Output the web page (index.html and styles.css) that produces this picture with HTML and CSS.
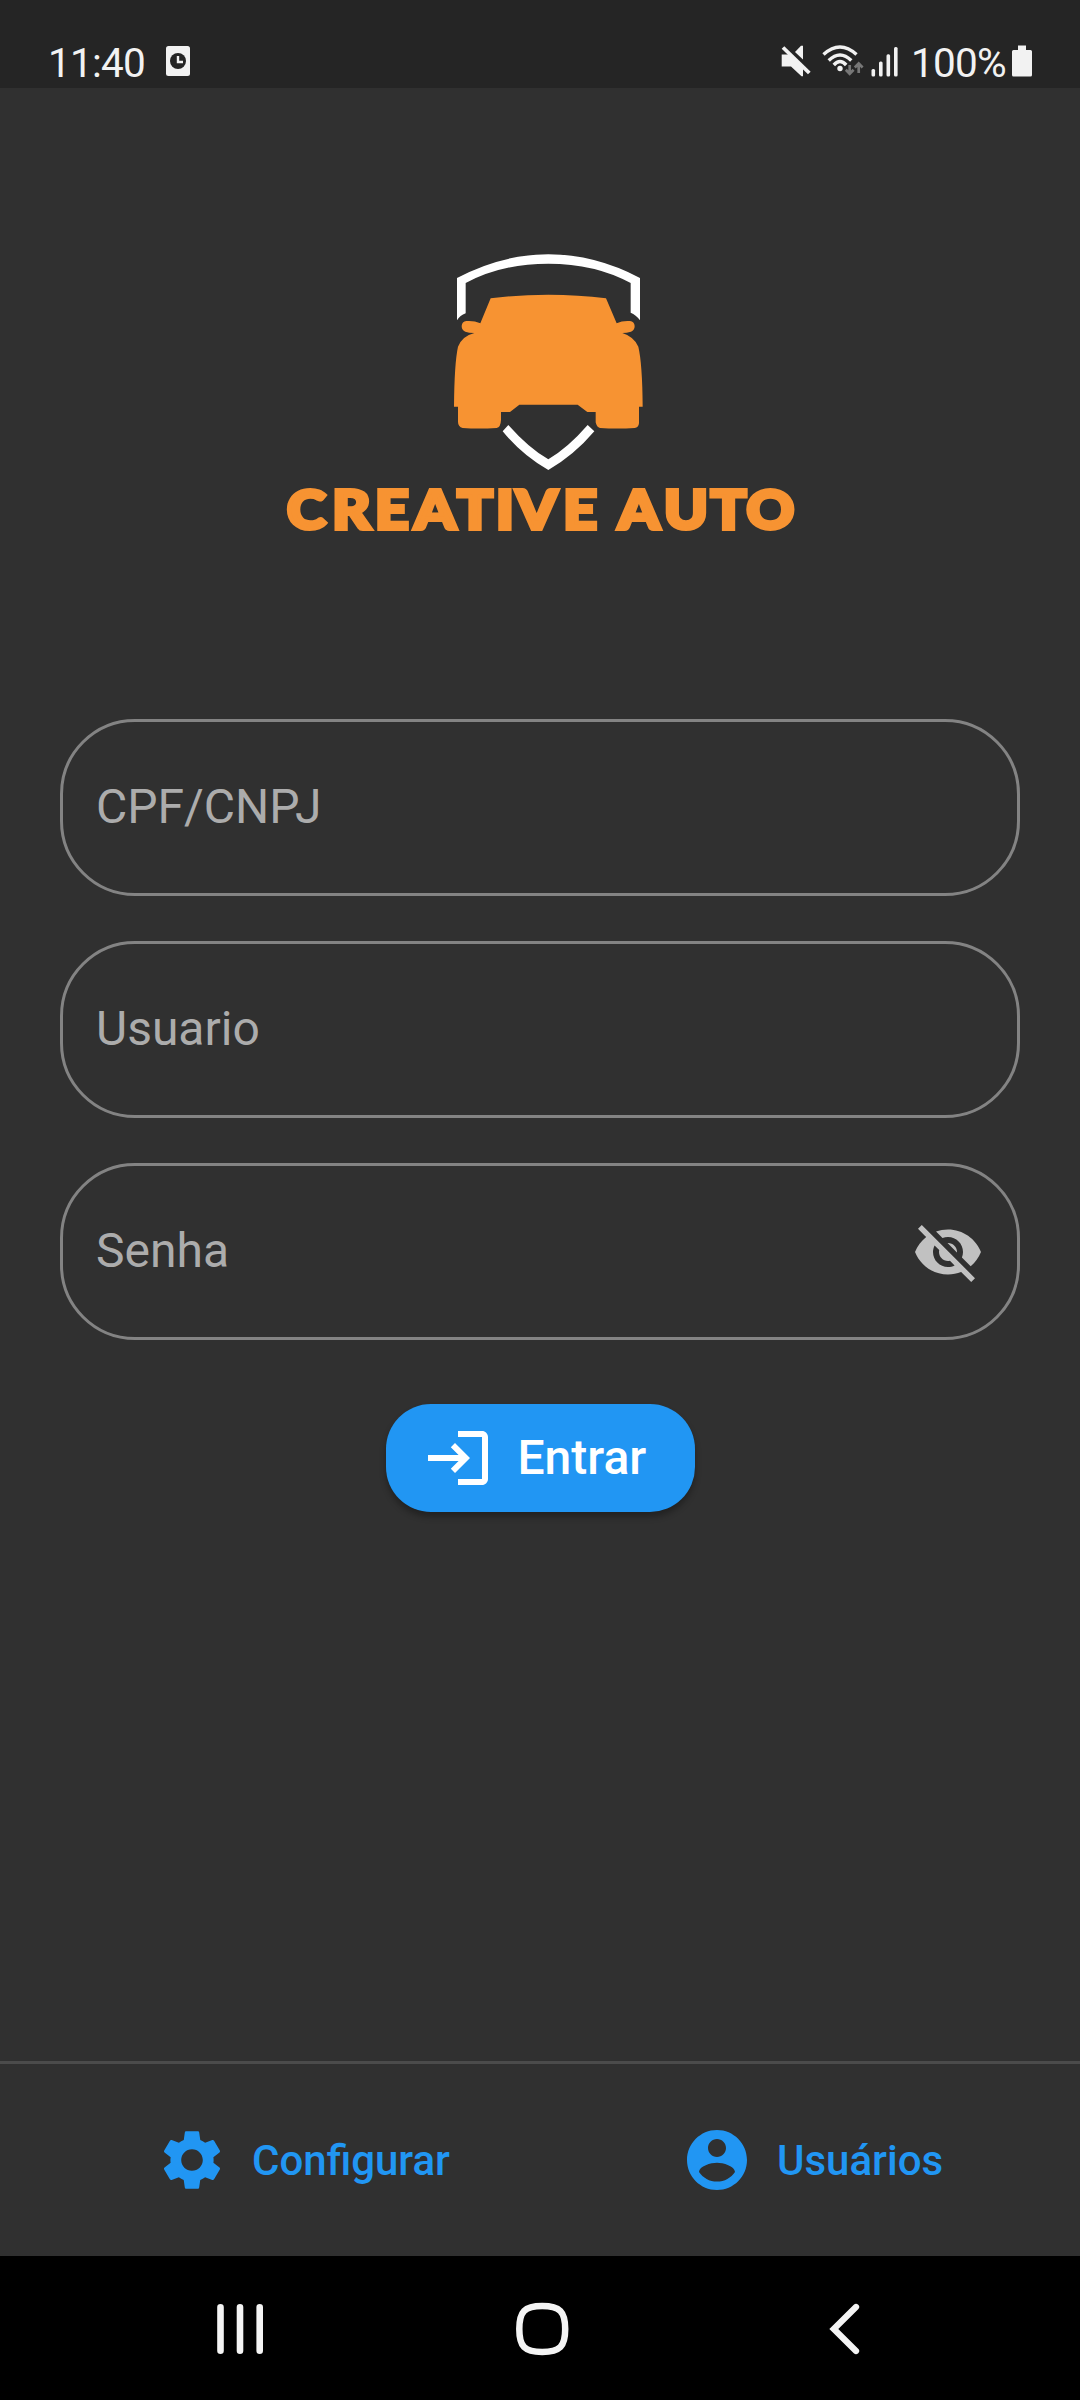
FILE: index.html
```html
<!DOCTYPE html>
<html lang="pt-BR">
<head>
<meta charset="utf-8">
<title>Creative Auto</title>
<link rel="stylesheet" href="styles.css">
</head>
<body>
<div class="screen">
  <header class="status">
    <div class="status-left">
      <span class="clock">11:40</span>
      <svg class="card-icon" width="24" height="30" viewBox="0 0 24 30"><rect width="24" height="30" rx="2.5" fill="#f2f2f2"/><circle cx="12" cy="15" r="8" fill="#252525"/><path d="M12 10v6h5" fill="none" stroke="#f2f2f2" stroke-width="2.4"/></svg>
    </div>
    <div class="status-right">
      <svg class="indicators" width="120" height="34" viewBox="780 44 120 34">
        <g fill="#f2f2f2">
          <path d="M781.700 54.500H790L803 67V76.200H801.500L791 66.500H781.700Z"/>
          <path d="M795 52L801 45.700H803V59.500Z"/>
          <circle cx="840" cy="68.500" r="2.700"/>
          <rect x="871.500" y="69" width="3.600" height="7.500" rx="1.500"/>
          <rect x="879" y="61.600" width="3.600" height="14.900" rx="1.500"/>
          <rect x="886.500" y="54.200" width="3.600" height="22.300" rx="1.500"/>
          <rect x="894" y="47" width="3.600" height="29.500" rx="1.500"/>
        </g>
        <path d="M783 47.500L809.300 73" stroke="#f2f2f2" stroke-width="3.800"/>
        <g fill="none" stroke="#f2f2f2" stroke-width="3.400">
          <path d="M823.500 54.500Q840 39.500 856.500 54.500"/>
          <path d="M828.700 60.500Q840 49.500 851.300 60.500"/>
          <path d="M833.800 65Q840 58 846.200 65"/>
        </g>
        <path d="M849.700 65v8M845.800 69.800l3.900 4 3.900-4M858.700 73v-8M854.800 67.500l3.900-4 3.900 4" fill="none" stroke="#777" stroke-width="2.700"/>
      </svg>
      <span class="percent">100%</span>
      <svg class="battery" width="20" height="32" viewBox="0 0 20 32"><path d="M6 .5h8V5h4.500Q20 5 20 6.500V30Q20 31.500 18.500 31.500H1.500Q0 31.500 0 30V6.500Q0 5 1.500 5H6Z" fill="#f2f2f2"/></svg>
    </div>
  </header>

  <main class="content">
    <svg class="logo" width="560" height="330" viewBox="260 240 560 330">
      <g transform="translate(430 230) scale(.33333)">
        <g fill="#fff">
          <path d="M81 271V144Q215 73 355 73Q495 73 630 144V271Q618 254 602 248V159Q495 101 355 101Q215 101 107 159V250Q90 256 81 271Z"/>
          <path d="M235 585Q297 655 355 688Q415 652 473 585L493 604Q432 676 355 720Q277 676 218 604Z"/>
        </g>
        <path fill="#f79332" d="M182 205Q265 194 355 194Q445 194 528 205L560 280Q578 271 600 273Q613 275 614 288Q614 301 603 305Q590 309 577 309Q612 320 625 350Q637 400 638 530H627V580Q626 592 614 594Q562 597 510 594Q500 592 497 577V546H472L443 524H268L240 546H213V570Q212 592 200 594Q145 597 98 594Q84 590 84 575V530H72Q73 400 84 350Q97 318 133 309Q116 309 106 305Q95 301 95 288Q96 275 109 273Q132 271 151 280Z"/>
      </g>
      <g transform="translate(280 529.200) scale(1.1 1)">
        <text class="brand" x="6.300 47.400 86.300 122.300 161.200 196.300 214.500 257.600 296 307.600 349 391.700 424" y="0">CREATIVE AUTO</text>
      </g>
    </svg>

    <form class="form">
      <label class="field"><span>CPF/CNPJ</span></label>
      <label class="field"><span>Usuario</span></label>
      <label class="field"><span>Senha</span>
        <svg class="icon eye" viewBox="0 0 24 24"><path d="M12 7c2.760 0 5 2.240 5 5 0 .65-.13 1.260-.36 1.830l2.920 2.920c1.510-1.260 2.700-2.890 3.430-4.750-1.730-4.390-6-7.500-11-7.500-1.400 0-2.740.25-3.980.7l2.160 2.160C10.740 7.130 11.350 7 12 7zM2 4.270l2.280 2.280.46.46C3.080 8.300 1.780 10.020 1 12c1.730 4.390 6 7.500 11 7.500 1.550 0 3.030-.3 4.380-.84l.42.42L19.730 22 21 20.730 3.270 3 2 4.270zM7.530 9.800l1.550 1.550c-.05.21-.08.43-.08.65 0 1.660 1.340 3 3 3 .22 0 .44-.03.65-.08l1.550 1.550c-.67.33-1.410.53-2.200.53-2.760 0-5-2.240-5-5 0-.79.2-1.530.53-2.200zm4.310-.78l3.150 3.150.02-.16c0-1.660-1.340-3-3-3l-.17.01z"/></svg>
      </label>
      <button class="submit" type="button">
        <svg class="icon" viewBox="0 0 24 24"><path d="M11 7L9.600 8.400l2.600 2.600H2v2h10.200l-2.600 2.600L11 17l5-5-5-5zm9 12h-8v2h8c1.100 0 2-.9 2-2V5c0-1.100-.9-2-2-2h-8v2h8v14z"/></svg>
        <span>Entrar</span>
      </button>
    </form>
  </main>

  <footer class="actions">
    <a class="action">
      <svg class="icon" viewBox="0 0 24 24"><path d="M19.140 12.940c.04-.3.06-.61.06-.94 0-.32-.02-.64-.07-.94l2.030-1.580c.18-.14.23-.41.12-.61l-1.920-3.320c-.12-.22-.37-.29-.59-.22l-2.390.96c-.5-.38-1.030-.7-1.620-.94l-.36-2.540c-.04-.24-.24-.41-.48-.41h-3.840c-.24 0-.43.17-.47.41l-.36 2.540c-.59.24-1.130.57-1.620.94l-2.390-.96c-.22-.08-.47 0-.59.22L2.740 8.870c-.12.21-.08.47.12.61l2.030 1.580c-.05.3-.09.63-.09.94s.02.64.07.94l-2.030 1.580c-.18.14-.23.41-.12.61l1.920 3.320c.12.22.37.29.59.22l2.390-.96c.5.38 1.030.7 1.620.94l.36 2.540c.05.24.24.41.48.41h3.840c.24 0 .44-.17.47-.41l.36-2.540c.59-.24 1.130-.56 1.620-.94l2.390.96c.22.08.47 0 .59-.22l1.920-3.320c.12-.22.07-.47-.12-.61l-2.010-1.580zM12 15.600c-1.980 0-3.600-1.620-3.600-3.600s1.620-3.600 3.600-3.600 3.600 1.620 3.600 3.600-1.620 3.600-3.600 3.600z"/></svg>
      <span>Configurar</span>
    </a>
    <a class="action">
      <svg class="icon" viewBox="0 0 24 24"><path d="M12 2C6.480 2 2 6.480 2 12s4.480 10 10 10 10-4.480 10-10S17.520 2 12 2zm0 3c1.660 0 3 1.340 3 3s-1.340 3-3 3-3-1.340-3-3 1.340-3 3-3zm0 14.200c-2.500 0-4.710-1.280-6-3.220.03-1.990 4-3.080 6-3.080 1.990 0 5.970 1.090 6 3.080-1.290 1.940-3.500 3.220-6 3.220z"/></svg>
      <span>Usuários</span>
    </a>
  </footer>

  <nav class="system-nav">
    <svg width="44" height="54" viewBox="218 2302 44 54"><path d="M220.500 2307.300v43.400M240 2307.300v43.400M259.700 2307.300v43.400" stroke="#f4f4f4" stroke-width="6.600" stroke-linecap="round"/></svg>
    <svg width="54" height="54" viewBox="515 2302 54 54"><path d="M519.300 2329C519.300 2311.500 524.500 2306 542.200 2306S565.200 2311.500 565.200 2329 560 2352 542.200 2352 519.300 2346.500 519.300 2329Z" fill="none" stroke="#f4f4f4" stroke-width="6.500"/></svg>
    <svg width="34" height="54" viewBox="828 2302 34 54"><path d="M856 2307L833.800 2329 856 2351" fill="none" stroke="#f4f4f4" stroke-width="6.300" stroke-linecap="round"/></svg>
  </nav>
</div>
</body>
</html>
```
FILE: styles.css
```css
* { box-sizing: border-box; }

body {
  margin: 0;
  background: #303030;
  font-family: Roboto, "Liberation Sans", sans-serif;
}

.screen {
  display: flex;
  flex-direction: column;
  width: 1080px;
  height: 2400px;
  overflow: hidden;
}

.status {
  display: flex;
  justify-content: space-between;
  height: 88px;
  padding: 37px 48px 0 48px;
  background: #252525;
  color: #f2f2f2;
  font-size: 40.500px;
  line-height: 52px;
  letter-spacing: -.8px;
}

.status-left, .status-right { display: flex; }
.clock { width: 118px; }
.card-icon { margin-top: 9px; }
.indicators { margin-top: 7px; }
.percent { width: 101px; margin-left: 11px; }
.battery { margin-top: 8px; }

.content {
  flex: 1;
  display: flex;
  flex-direction: column;
  padding: 152px 60px 0;
}

.logo { margin-left: 200px; }

.brand {
  font-family: Lato, sans-serif;
  font-size: 53.500px;
  font-weight: 900;
  fill: #f79332;
  stroke: #f79332;
  stroke-width: 4px;
  white-space: pre;
}

.form {
  display: flex;
  flex-direction: column;
  gap: 45px;
  margin-top: 149px;
}

.field {
  display: flex;
  align-items: center;
  justify-content: space-between;
  height: 177px;
  padding: 0 33px;
  border: 3px solid #838383;
  border-radius: 75px;
  color: #acacac;
  font-size: 48px;
  line-height: 56px;
}

.field span { margin-top: -2px; }

.icon {
  flex: none;
  width: 72px;
  height: 72px;
  fill: currentColor;
}

.eye { color: #c1c1c1; }

.submit {
  display: flex;
  align-items: center;
  align-self: center;
  gap: 24px;
  width: 309px;
  height: 108px;
  margin-top: 19px;
  padding: 0 36px;
  border: 0;
  border-radius: 45px;
  background: #2196f3;
  box-shadow: 0 5px 6px rgba(0, 0, 0, .3);
  color: #fff;
  font: 500 48px/56px Roboto, sans-serif;
}

.actions {
  display: flex;
  height: 195px;
  padding-left: 156px;
  border-top: 3px solid #4b4b4b;
  color: #2196f3;
  font-size: 42px;
  font-weight: 500;
}

.action {
  display: flex;
  align-items: center;
  gap: 24px;
}

.action:first-child { flex: 0 0 525px; }

.system-nav {
  display: grid;
  grid-template-columns: 297px 313px auto;
  align-items: center;
  height: 144px;
  padding: 2px 0 0 218px;
  background: #000;
}

.system-nav svg { overflow: visible; }
```
